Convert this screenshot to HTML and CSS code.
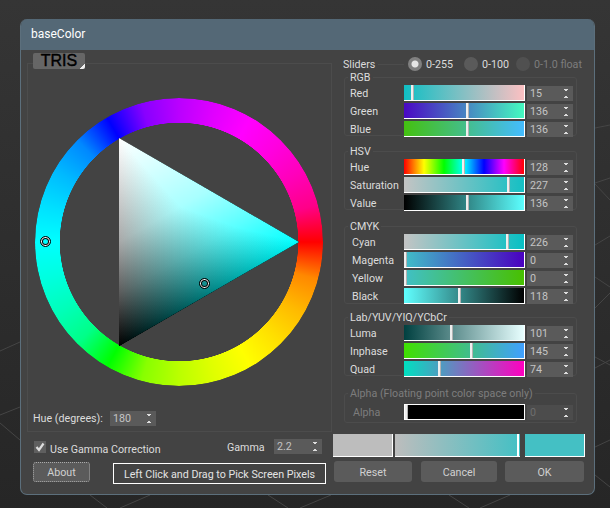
FILE: index.html
```html
<!DOCTYPE html>
<html lang="en">
<head>
    <meta charset="UTF-8">
    <meta name="viewport" content="width=device-width, initial-scale=1.0">
    <title>baseColor</title>
    <link rel="stylesheet" href="styles.css">
</head>
<body>

    <svg class="floor" width="610" height="508" aria-hidden="true">
        <path d="M0 351 L20 342 M0 415 L20 407 M0 423 L20 440 M90 495 L107 508 M150 495 L120 508 M268 495 L288 508 M331 495 L300 508 M449 495 L469 508 M510 495 L480 508 M595 128 L610 125 M595 183 L610 178 M595 184 L610 200 M595 245 L610 236 M595 277 L610 287 M595 308 L610 293 M595 357 L610 365 M595 368 L610 360 M595 447 L610 440 M595 475 L610 487"/>
    </svg>

    <div class="window">
        <div class="title-bar">baseColor</div>

        <div class="main">
            <div class="wheel-panel">
                <div class="tris-tab">TRIS</div>
                <div class="wheel-area">
                    <div class="wheel"></div>
                    <svg class="triangle" width="180" height="208" viewBox="0 0 180 208">
                        <defs>
                            <linearGradient id="cyanRamp" gradientUnits="userSpaceOnUse" x1="0" y1="0" x2="180" y2="0">
                                <stop offset="0" stop-color="#000"/>
                                <stop offset="1" stop-color="#0ff"/>
                            </linearGradient>
                            <linearGradient id="whiteRamp" gradientUnits="userSpaceOnUse" x1="0" y1="0" x2="90" y2="156">
                                <stop offset="0" stop-color="#fff"/>
                                <stop offset="0.5" stop-color="#a8a8a8"/>
                                <stop offset="0.75" stop-color="#5a5a5a"/>
                                <stop offset="1" stop-color="#000"/>
                            </linearGradient>
                        </defs>
                        <polygon points="0,0 180,104 0,208" fill="url(#cyanRamp)"/>
                        <polygon class="add-layer" points="0,0 180,104 0,208" fill="url(#whiteRamp)"/>
                    </svg>
                    <div class="marker marker-hue"></div>
                    <div class="marker marker-color"></div>
                </div>
                <div class="hue-row">
                    <span class="hue-label">Hue (degrees):</span>
                    <div class="spinner">180</div>
                </div>
            </div>

            <div class="sliders-panel">
                <div class="sliders-head">
                    <span class="sliders-title">Sliders</span>
                    <span class="radio radio-on"></span><span class="radio-label">0-255</span>
                    <span class="radio"></span><span class="radio-label">0-100</span>
                    <span class="radio radio-off"></span><span class="radio-label radio-last dim">0-1.0 float</span>
                </div>

                <fieldset class="group group-rgb">
                    <legend>RGB</legend>
                    <div class="row"><label>Red</label><div class="track g-red"><i style="left:7px"></i></div><div class="spinner">15</div></div>
                    <div class="row"><label>Green</label><div class="track g-green"><i style="left:62px"></i></div><div class="spinner">136</div></div>
                    <div class="row"><label>Blue</label><div class="track g-blue"><i style="left:62px"></i></div><div class="spinner">136</div></div>
                </fieldset>

                <fieldset class="group group-hsv">
                    <legend>HSV</legend>
                    <div class="row"><label>Hue</label><div class="track g-hue"><i style="left:58px"></i></div><div class="spinner">128</div></div>
                    <div class="row"><label>Saturation</label><div class="track g-sat"><i style="left:103px"></i></div><div class="spinner">227</div></div>
                    <div class="row"><label>Value</label><div class="track g-val"><i style="left:62px"></i></div><div class="spinner">136</div></div>
                </fieldset>

                <fieldset class="group group-cmyk">
                    <legend>CMYK</legend>
                    <div class="row"><label>Cyan</label><div class="track g-cyan"><i style="left:102px"></i></div><div class="spinner">226</div></div>
                    <div class="row"><label>Magenta</label><div class="track g-magenta"><i style="left:0"></i></div><div class="spinner">0</div></div>
                    <div class="row"><label>Yellow</label><div class="track g-yellow"><i style="left:0"></i></div><div class="spinner">0</div></div>
                    <div class="row"><label>Black</label><div class="track g-black"><i style="left:54px"></i></div><div class="spinner">118</div></div>
                </fieldset>

                <fieldset class="group group-lab">
                    <legend>Lab/YUV/YIQ/YCbCr</legend>
                    <div class="row"><label>Luma</label><div class="track g-luma"><i style="left:46px"></i></div><div class="spinner">101</div></div>
                    <div class="row"><label>Inphase</label><div class="track g-inphase"><i style="left:66px"></i></div><div class="spinner">145</div></div>
                    <div class="row"><label>Quad</label><div class="track g-quad"><i style="left:34px"></i></div><div class="spinner">74</div></div>
                </fieldset>

                <fieldset class="group group-alpha dim">
                    <legend>Alpha (Floating point color space only)</legend>
                    <div class="row"><label>Alpha</label><div class="track g-alpha"><i style="left:0"></i></div><div class="spinner">0</div></div>
                </fieldset>
            </div>
        </div>

        <div class="footer">
            <div class="footer-left">
                <div class="gamma-row">
                    <span class="check">
                        <svg width="12" height="12" viewBox="0 0 12 12"><path d="M2.5 6 L5 9 L9.5 2.5" fill="none" stroke="#ddd" stroke-width="2.2"/></svg>
                    </span>
                    <span class="gamma-check-label">Use Gamma Correction</span>
                    <span class="gamma-label">Gamma</span>
                    <div class="spinner gamma-spinner">2.2</div>
                </div>
                <div class="action-row">
                    <button class="btn about-btn">About</button>
                    <div class="pick-box">Left Click and Drag to Pick Screen Pixels</div>
                </div>
            </div>
            <div class="footer-right">
                <div class="swatches">
                    <div class="swatch swatch-old"></div>
                    <div class="swatch swatch-mix"><i></i></div>
                    <div class="swatch swatch-new"></div>
                </div>
                <div class="buttons">
                    <button class="btn reset-btn">Reset</button>
                    <button class="btn cancel-btn">Cancel</button>
                    <button class="btn ok-btn">OK</button>
                </div>
            </div>
        </div>
    </div>

</body>
</html>
```

FILE: styles.css
```css
html, body {
    margin: 0;
    height: 508px;
    overflow: hidden;
}
body {
    background: linear-gradient(#353535, #262626);
    font-family: Roboto, sans-serif;
    font-size: 10.7px;
    color: #dcdcdc;
    position: relative;
}
.floor {
    position: absolute;
    left: 0;
    top: 0;
}
.floor path {
    stroke: #454545;
    stroke-width: 1;
    fill: none;
}
.window {
    position: relative;
    box-sizing: border-box;
    width: 575px;
    height: 476px;
    margin: 19px 0 0 20px;
    background-color: #434343;
    border: 1px solid #5c6f7c;
    border-top: none;
    border-radius: 7px;
    overflow: hidden;
}
.title-bar {
    height: 31px;
    line-height: 31px;
    padding-left: 10px;
    background-color: #546876;
    color: #fff;
    font-size: 12px;
}

/* wheel side */
.main {
    display: flex;
}
.wheel-panel {
    position: relative;
    box-sizing: border-box;
    width: 305px;
    height: 369px;
    margin: 13px 0 0 6px;
    border: 1px solid #4c4c4c;
}
.tris-tab {
    position: absolute;
    left: 5px;
    top: -11px;
    width: 52px;
    height: 16px;
    background: linear-gradient(135deg, #666 0, #666 92%, #eee 92%);
    border-radius: 2px;
    color: #000;
    font-family: "Liberation Sans", sans-serif;
    font-size: 16px;
    line-height: 16px;
    text-align: center;
    -webkit-text-stroke: 0.4px #000;
}
.wheel-area {
    position: relative;
    width: 288px;
    height: 288px;
    margin: 34px 0 0 7px;
}
.wheel {
    width: 288px;
    height: 288px;
    border-radius: 50%;
    background: conic-gradient(from 90deg,
        #f00, #f80, #ffba00, #ffe000,
        #ff0, #e0ff00, #baff00, #8f0,
        #0f0, #0f8, #00ffba, #00ffe0,
        #0ff, #00e0ff, #00baff, #08f,
        #00f, #80f, #ba00ff, #e000ff,
        #f0f, #ff00e0, #ff00ba, #f08, #f00);
    -webkit-mask: radial-gradient(circle, transparent 119px, #000 119.5px);
    mask: radial-gradient(circle, transparent 119px, #000 119.5px);
}
.triangle {
    position: absolute;
    left: 84px;
    top: 40px;
    isolation: isolate;
}
.add-layer {
    mix-blend-mode: plus-lighter;
}
.marker {
    position: absolute;
    box-sizing: border-box;
    width: 11px;
    height: 11px;
    border: 1px solid #000;
    border-radius: 50%;
    box-shadow: inset 0 0 0 1px #fff, inset 0 0 0 2px #000;
}
.marker-hue {
    left: 5px;
    top: 138px;
}
.marker-color {
    left: 164px;
    top: 180px;
}
.hue-row {
    display: flex;
    align-items: center;
    margin: 25px 0 0 5px;
}
.hue-label {
    width: 77px;
}

/* spinners */
.spinner {
    position: relative;
    flex: none;
    box-sizing: border-box;
    width: 46px;
    height: 15px;
    line-height: 15px;
    padding-left: 3px;
    background-color: #5a5a5a;
    color: #c4c4c4;
}
.spinner::after {
    content: "";
    position: absolute;
    right: 5px;
    top: 3px;
    width: 4px;
    height: 9px;
    background:
        linear-gradient(45deg, transparent 50%, #ddd 50%) 0 0 / 2px 3px no-repeat,
        linear-gradient(-45deg, transparent 50%, #ddd 50%) 2px 0 / 2px 3px no-repeat,
        linear-gradient(135deg, transparent 50%, #ddd 50%) 0 6px / 2px 3px no-repeat,
        linear-gradient(-135deg, transparent 50%, #ddd 50%) 2px 6px / 2px 3px no-repeat;
}

/* sliders side */
.sliders-panel {
    width: 245px;
    margin: 7px 0 0 7px;
}
.sliders-head {
    display: flex;
    align-items: center;
    height: 14px;
    margin-left: 4px;
    white-space: nowrap;
}
.sliders-title {
    display: flex;
    align-items: center;
    gap: 3px;
    width: 65px;
    flex: none;
}
.sliders-title::after {
    content: "";
    flex: 1;
    height: 1px;
    margin-right: 4px;
    background-color: #4c4c4c;
}
.radio {
    box-sizing: border-box;
    flex: none;
    width: 14px;
    height: 14px;
    border-radius: 50%;
    background-color: #5a5a5a;
    margin-right: 4px;
}
.radio-on {
    background: radial-gradient(circle, #e6e6e6 0, #e6e6e6 3px, #808080 4px);
}
.radio-off {
    background-color: #505050;
}
.radio-label {
    width: 38px;
    flex: none;
}
.radio-label + .radio + .radio-label {
    width: 34px;
}
.radio-label.radio-last {
    width: 50px;
}
.dim {
    color: #7d7d7d;
}
.group {
    margin: 2px 0 0 5px;
    padding: 0 0 0 5px;
    width: 233px;
    box-sizing: border-box;
    height: 65px;
    border: 1px solid #4c4c4c;
    border-radius: 3px;
    min-width: 0;
}
.group legend {
    padding: 0 2px;
    margin-left: -2px;
    line-height: 13px;
    white-space: nowrap;
}
.group-rgb {
    margin-top: 0;
}
.group-hsv {
    margin-top: 9px;
}
.group-cmyk {
    margin-top: 10px;
    height: 84px;
}
.group-lab {
    margin-top: 7px;
}
.group-alpha {
    margin-top: 11px;
    height: 36px;
}
.group-alpha .row {
    margin-top: 3px;
}
.row {
    display: flex;
    align-items: center;
    height: 18px;
}
.row label {
    width: 54px;
    flex: none;
    white-space: nowrap;
}
.group-cmyk .row label {
    padding-left: 2px;
    width: 52px;
}
.group-alpha .row label {
    padding-left: 3px;
    width: 51px;
}
.track {
    position: relative;
    flex: none;
    box-sizing: border-box;
    width: 121px;
    height: 16px;
    margin-right: 2px;
    border-right: 1px solid #fff;
    border-bottom: 1px solid #fff;
}
.track i {
    position: absolute;
    top: 0;
    bottom: 0;
    width: 2px;
    background-color: #eee;
    border-right: 1px solid rgba(0, 0, 0, 0.25);
}
.group-alpha .track {
    border-left: 1px solid #fff;
    border-top: 1px solid #fff;
}
.g-red { background: linear-gradient(to right, #10bfc4, #fcc0c2); }
.g-green { background: linear-gradient(to right, #4a08c4, #44fac0); }
.g-blue { background: linear-gradient(to right, #44c010, #44bcff); }
.g-hue { background: linear-gradient(to right, #f00, #ff0, #0f0, #0ff, #00f, #f0f, #f00); }
.g-sat { background: linear-gradient(to right, #c4c4c4, #14c0c4); }
.g-val { background: linear-gradient(to right, #000, #5cffff); }
.g-cyan { background: linear-gradient(to right, #c4c4c4, #08c0c4); }
.g-magenta { background: linear-gradient(to right, #40c0c8, #4a00c0); }
.g-yellow { background: linear-gradient(to right, #40c0c8, #48c000); }
.g-black { background: linear-gradient(to right, #60ffff, #000); }
.g-luma { background: linear-gradient(to right, #004040, #e8ffff); }
.g-inphase { background: linear-gradient(to right, #40e000, #40a0ff); }
.g-quad { background: linear-gradient(to right, #00e0c0, #ff00c0); }
.g-alpha { background: #000; }
.group-alpha .spinner {
    background-color: #4c4c4c;
    color: #6e6e6e;
}

/* bottom strip */
.footer {
    display: flex;
}
.footer-left {
    width: 306px;
    margin: 5px 0 0 12px;
}
.gamma-row {
    display: flex;
    align-items: center;
    height: 20px;
}
.check {
    display: flex;
    width: 12px;
    height: 12px;
    background-color: #5f5f5f;
    margin: 0 4px 0 1px;
}
.gamma-check-label {
    width: 177px;
    margin-top: 4px;
}
.gamma-label {
    width: 47px;
}
.gamma-spinner {
    width: 48px;
    margin-top: -2px;
}
.action-row {
    display: flex;
    margin-top: 5px;
}
.btn {
    border: none;
    border-radius: 3px;
    background-color: #5b5b5b;
    color: #d0d0d0;
    font-family: inherit;
    font-size: 10.7px;
    padding: 1px 0 0;
}
.about-btn {
    width: 57px;
    height: 20px;
    border: 1px dotted #aaa;
}
.pick-box {
    box-sizing: border-box;
    width: 213px;
    height: 21px;
    line-height: 21px;
    margin: 1px 0 0 23px;
    text-align: center;
    border: 1px solid #fff;
    color: #e4e4e4;
}
.footer-right {
    margin: 2px 0 0 -6px;
}
.swatches {
    display: flex;
}
.swatch {
    box-sizing: border-box;
    height: 23px;
    border-bottom: 1px solid #fff;
    position: relative;
}
.swatch-old {
    width: 60px;
    background-color: #bdbdbd;
    border-right: 1px solid #fff;
}
.swatch-mix {
    width: 125px;
    margin-left: 2px;
    background: linear-gradient(to right, #bdbdbd, #44c0c4);
}
.swatch-mix i {
    position: absolute;
    right: 1px;
    top: 0;
    bottom: 0;
    width: 2px;
    background-color: #fff;
}
.swatch-new {
    width: 60px;
    margin-left: 5px;
    background-color: #44c0c4;
    border-right: 1px solid #fff;
}
.buttons {
    display: flex;
    margin: 4px 0 0 1px;
}
.buttons .btn {
    height: 21px;
}
.reset-btn {
    width: 78px;
}
.cancel-btn {
    width: 76px;
    margin-left: 9px;
}
.ok-btn {
    width: 79px;
    margin-left: 8px;
}
```
